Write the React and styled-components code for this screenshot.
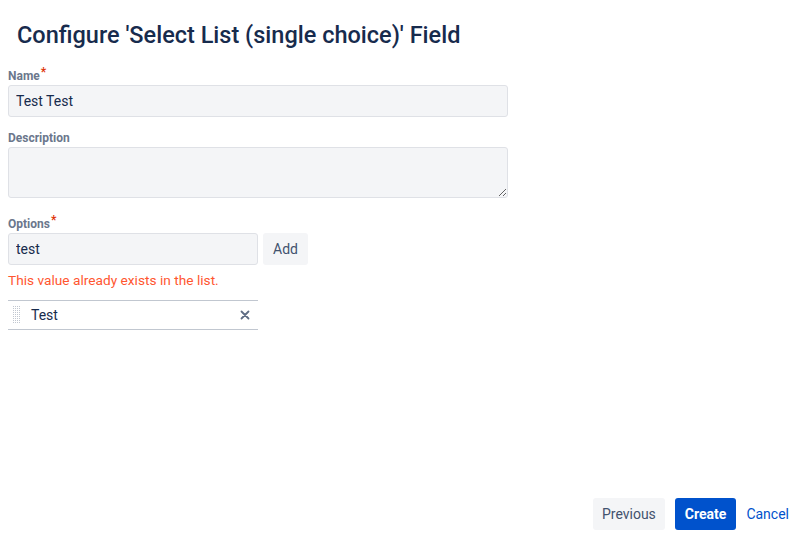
import React from 'react';
import styled, { createGlobalStyle } from 'styled-components';

const colors = {
    text: '#172B4D',
    subtle: '#6B778C',
    field: '#F4F5F7',
    fieldBorder: '#DFE1E6',
    red: '#DE350B',
    error: '#FF5630',
    blue: '#0052CC',
    neutral: '#42526E',
    line: '#C1C7D0',
};

const GlobalStyle = createGlobalStyle`
    html, body {
        margin: 0;
        padding: 0;
        background: #fff;
    }
    body {
        font-family: Roboto, "Noto Sans", sans-serif;
        color: ${colors.text};
    }
`;

const Page = styled.div`
    height: 100vh;
    box-sizing: border-box;
    display: flex;
    flex-direction: column;
    padding: 0 8px 22px 8px;
`;

const Title = styled.h1`
    margin: 19px 0 0 9px;
    font-size: 23.5px;
    font-weight: 500;
    line-height: 32px;
    color: ${colors.text};
`;

const Form = styled.div`
    display: flex;
    flex-direction: column;
    width: 500px;
    margin-top: 18px;
`;

const Field = styled.div`
    display: flex;
    flex-direction: column;
    margin-bottom: ${(p) => p.$gap || 14}px;
`;

const Label = styled.label`
    font-size: 12px;
    font-weight: 700;
    line-height: 15px;
    color: ${colors.subtle};
    margin-bottom: 1px;
`;

const Required = styled.span`
    color: ${colors.red};
    position: relative;
    top: -4px;
    margin-left: 1px;
`;

const TextInput = styled.input`
    box-sizing: border-box;
    width: ${(p) => p.$width || 500}px;
    height: 32px;
    padding: 0 7px;
    border: 1px solid ${colors.fieldBorder};
    border-radius: 3px;
    background: ${colors.field};
    font-family: inherit;
    font-size: 14px;
    color: ${colors.text};
    outline: none;
`;

const TextArea = styled.textarea`
    box-sizing: border-box;
    width: 500px;
    height: 51px;
    padding: 6px 7px;
    border: 1px solid ${colors.fieldBorder};
    border-radius: 3px;
    background: ${colors.field};
    font-family: inherit;
    font-size: 14px;
    resize: vertical;
    outline: none;
    display: block;
`;

const InputRow = styled.div`
    display: flex;
    gap: 5px;
    align-items: center;
`;

const Button = styled.button`
    height: 32px;
    padding: 0 ${(p) => (p.$pad !== undefined ? p.$pad : 10)}px;
    border: none;
    border-radius: 3px;
    background: ${(p) => (p.$primary ? colors.blue : p.$link ? 'transparent' : colors.field)};
    color: ${(p) => (p.$primary ? '#fff' : p.$link ? colors.blue : colors.neutral)};
    font-family: inherit;
    font-size: 14px;
    font-weight: ${(p) => (p.$primary ? 700 : 400)};
    cursor: pointer;
`;

const ErrorText = styled.div`
    margin-top: 6px;
    font-size: 13.7px;
    line-height: 18px;
    color: ${colors.error};
`;

const OptionList = styled.ul`
    list-style: none;
    margin: 11px 0 0 0;
    padding: 0;
    width: 250px;
    border-top: 1px solid ${colors.line};
`;

const OptionItem = styled.li`
    display: flex;
    align-items: center;
    height: 28px;
    border-bottom: 1px solid ${colors.line};
    font-size: 14px;
    color: ${colors.text};
`;

const Handle = styled.span`
    display: flex;
    margin: 0 10px 0 5px;
    color: #C1C7D0;
`;

const OptionName = styled.span`
    flex: 1;
`;

const Remove = styled.button`
    border: none;
    background: transparent;
    padding: 0 8px;
    color: #5E6C84;
    display: flex;
    align-items: center;
    cursor: pointer;
`;

const Footer = styled.div`
    margin-top: auto;
    display: flex;
    justify-content: flex-end;
    gap: 10px;
    padding-right: 13px;
`;

function DragDots() {
    const dots = [];
    for (let r = 0; r < 9; r++) {
        for (let c = 0; c < 4; c++) {
            dots.push(<rect key={r + '-' + c} x={c * 2} y={r * 2} width="1" height="1" fill="currentColor" />);
        }
    }
    return (
        <svg width="8" height="18" viewBox="0 0 8 18">{dots}</svg>
    );
}

function CloseIcon() {
    return (
        <svg width="10" height="10" viewBox="0 0 10 10">
            <path d="M1.5 1.5 L8.5 8.5 M8.5 1.5 L1.5 8.5" stroke="currentColor" strokeWidth="1.8" strokeLinecap="round" />
        </svg>
    );
}

export default function App() {
    return (
        <>
            <GlobalStyle />
            <Page>
                <Title>Configure 'Select List (single choice)' Field</Title>
                <Form>
                    <Field>
                        <Label>Name<Required>*</Required></Label>
                        <TextInput defaultValue="Test Test" />
                    </Field>
                    <Field $gap={19}>
                        <Label>Description</Label>
                        <TextArea />
                    </Field>
                    <Field>
                        <Label>Options<Required>*</Required></Label>
                        <InputRow>
                            <TextInput $width={250} defaultValue="test" />
                            <Button>Add</Button>
                        </InputRow>
                        <ErrorText>This value already exists in the list.</ErrorText>
                        <OptionList>
                            <OptionItem>
                                <Handle><DragDots /></Handle>
                                <OptionName>Test</OptionName>
                                <Remove><CloseIcon /></Remove>
                            </OptionItem>
                        </OptionList>
                    </Field>
                </Form>
                <Footer>
                    <Button $pad={9}>Previous</Button>
                    <Button $primary $pad={10}>Create</Button>
                    <Button $link $pad={0}>Cancel</Button>
                </Footer>
            </Page>
        </>
    );
}
